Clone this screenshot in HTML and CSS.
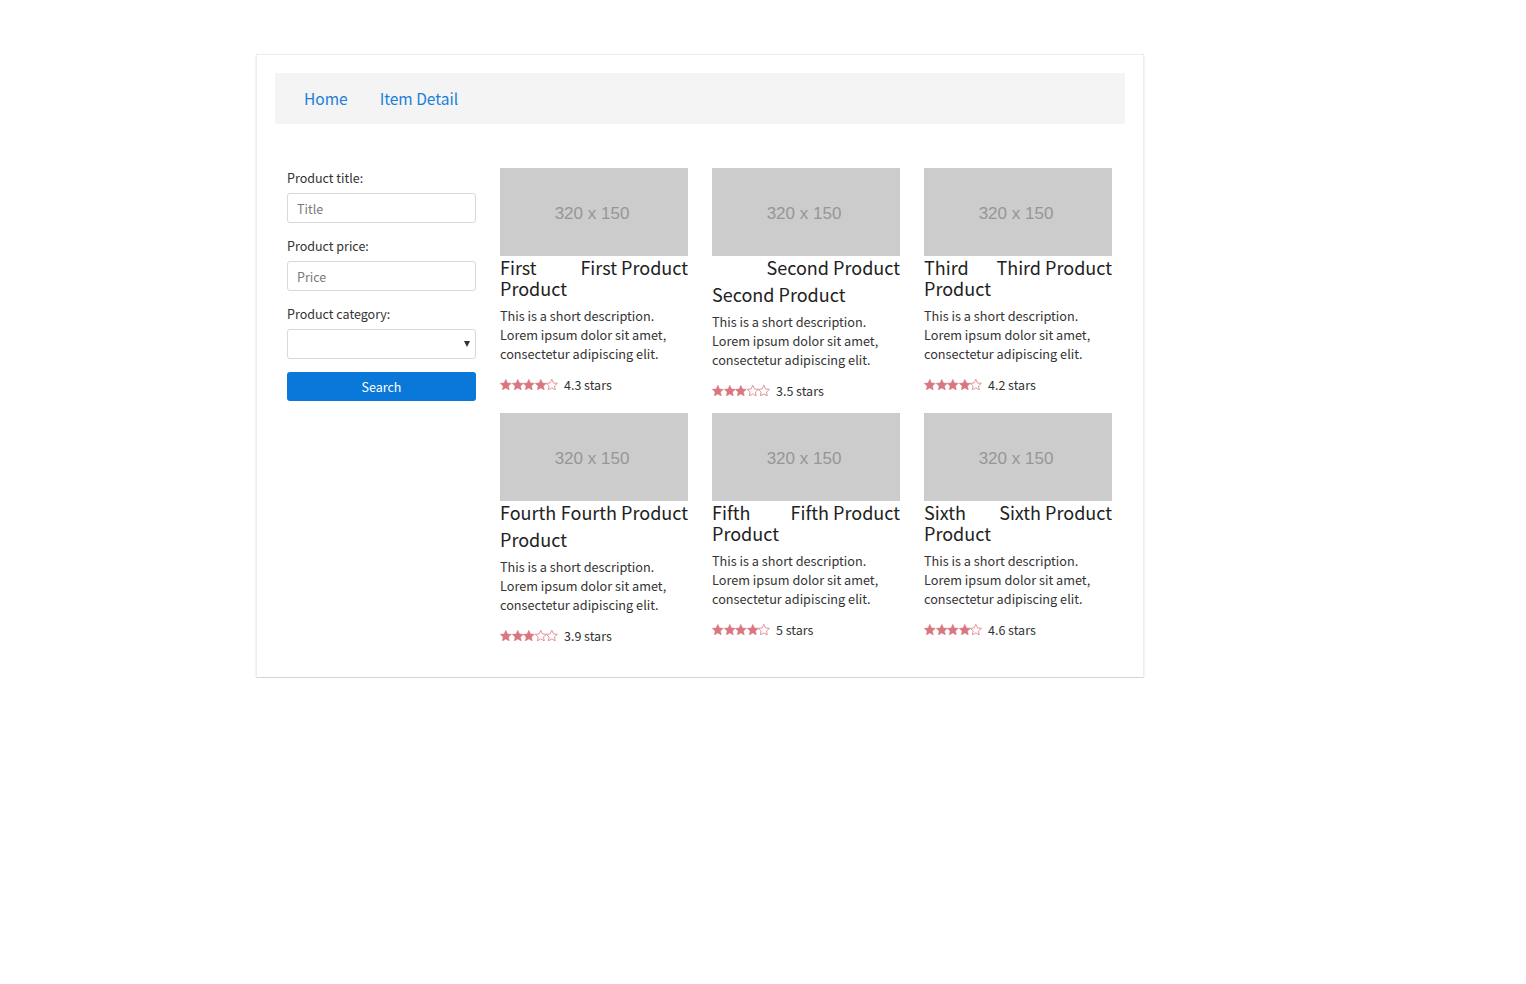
FILE: index.html
```html
<!DOCTYPE html>
<html lang="en">
<head>
<meta charset="utf-8">
<title>Products</title>
<link rel="stylesheet" href="styles.css">
</head>
<body>
<svg width="0" height="0" class="defs" aria-hidden="true">
  <defs>
    <polygon id="star" points="6,0.3 7.75,4.1 11.8,4.5 8.75,7.2 9.6,11.3 6,9.2 2.4,11.3 3.25,7.2 0.2,4.5 4.25,4.1"/>
  </defs>
</svg>
<div class="page">
  <nav class="nav">
    <a href="#" class="nav-link">Home</a>
    <a href="#" class="nav-link">Item Detail</a>
  </nav>
  <div class="content">
    <form class="filters">
      <label class="label">Product title:</label>
      <input class="field" type="text" placeholder="Title">
      <label class="label">Product price:</label>
      <input class="field" type="text" placeholder="Price">
      <label class="label">Product category:</label>
      <div class="select-wrap">
        <select class="field select"><option></option></select>
      </div>
      <button type="button" class="btn">Search</button>
    </form>
    <div class="grid">
      <div class="product">
        <div class="thumb">320 x 150</div>
        <div class="caption">
          <h4 class="price">First Product</h4>
          <h4 class="title">First Product</h4>
          <p class="desc">This is a short description. Lorem ipsum dolor sit amet, consectetur adipiscing elit.</p>
          <div class="rating">
            <span class="stars">
              <svg class="star" viewBox="0 0 12 12"><use href="#star"/></svg><svg class="star" viewBox="0 0 12 12"><use href="#star"/></svg><svg class="star" viewBox="0 0 12 12"><use href="#star"/></svg><svg class="star" viewBox="0 0 12 12"><use href="#star"/></svg><svg class="star empty" viewBox="0 0 12 12"><use href="#star"/></svg>
            </span>
            <span class="rating-text">4.3 stars</span>
          </div>
        </div>
      </div>
      <div class="product">
        <div class="thumb">320 x 150</div>
        <div class="caption">
          <h4 class="price">Second Product</h4>
          <h4 class="title">Second Product</h4>
          <p class="desc">This is a short description. Lorem ipsum dolor sit amet, consectetur adipiscing elit.</p>
          <div class="rating">
            <span class="stars">
              <svg class="star" viewBox="0 0 12 12"><use href="#star"/></svg><svg class="star" viewBox="0 0 12 12"><use href="#star"/></svg><svg class="star" viewBox="0 0 12 12"><use href="#star"/></svg><svg class="star empty" viewBox="0 0 12 12"><use href="#star"/></svg><svg class="star empty" viewBox="0 0 12 12"><use href="#star"/></svg>
            </span>
            <span class="rating-text">3.5 stars</span>
          </div>
        </div>
      </div>
      <div class="product">
        <div class="thumb">320 x 150</div>
        <div class="caption">
          <h4 class="price">Third Product</h4>
          <h4 class="title">Third Product</h4>
          <p class="desc">This is a short description. Lorem ipsum dolor sit amet, consectetur adipiscing elit.</p>
          <div class="rating">
            <span class="stars">
              <svg class="star" viewBox="0 0 12 12"><use href="#star"/></svg><svg class="star" viewBox="0 0 12 12"><use href="#star"/></svg><svg class="star" viewBox="0 0 12 12"><use href="#star"/></svg><svg class="star" viewBox="0 0 12 12"><use href="#star"/></svg><svg class="star empty" viewBox="0 0 12 12"><use href="#star"/></svg>
            </span>
            <span class="rating-text">4.2 stars</span>
          </div>
        </div>
      </div>
      <div class="product">
        <div class="thumb">320 x 150</div>
        <div class="caption">
          <h4 class="price">Fourth Product</h4>
          <h4 class="title">Fourth Product</h4>
          <p class="desc">This is a short description. Lorem ipsum dolor sit amet, consectetur adipiscing elit.</p>
          <div class="rating">
            <span class="stars">
              <svg class="star" viewBox="0 0 12 12"><use href="#star"/></svg><svg class="star" viewBox="0 0 12 12"><use href="#star"/></svg><svg class="star" viewBox="0 0 12 12"><use href="#star"/></svg><svg class="star empty" viewBox="0 0 12 12"><use href="#star"/></svg><svg class="star empty" viewBox="0 0 12 12"><use href="#star"/></svg>
            </span>
            <span class="rating-text">3.9 stars</span>
          </div>
        </div>
      </div>
      <div class="product">
        <div class="thumb">320 x 150</div>
        <div class="caption">
          <h4 class="price">Fifth Product</h4>
          <h4 class="title">Fifth Product</h4>
          <p class="desc">This is a short description. Lorem ipsum dolor sit amet, consectetur adipiscing elit.</p>
          <div class="rating">
            <span class="stars">
              <svg class="star" viewBox="0 0 12 12"><use href="#star"/></svg><svg class="star" viewBox="0 0 12 12"><use href="#star"/></svg><svg class="star" viewBox="0 0 12 12"><use href="#star"/></svg><svg class="star" viewBox="0 0 12 12"><use href="#star"/></svg><svg class="star empty" viewBox="0 0 12 12"><use href="#star"/></svg>
            </span>
            <span class="rating-text">5 stars</span>
          </div>
        </div>
      </div>
      <div class="product">
        <div class="thumb">320 x 150</div>
        <div class="caption">
          <h4 class="price">Sixth Product</h4>
          <h4 class="title">Sixth Product</h4>
          <p class="desc">This is a short description. Lorem ipsum dolor sit amet, consectetur adipiscing elit.</p>
          <div class="rating">
            <span class="stars">
              <svg class="star" viewBox="0 0 12 12"><use href="#star"/></svg><svg class="star" viewBox="0 0 12 12"><use href="#star"/></svg><svg class="star" viewBox="0 0 12 12"><use href="#star"/></svg><svg class="star" viewBox="0 0 12 12"><use href="#star"/></svg><svg class="star empty" viewBox="0 0 12 12"><use href="#star"/></svg>
            </span>
            <span class="rating-text">4.6 stars</span>
          </div>
        </div>
      </div>
    </div>
  </div>
</div>
</body>
</html>
```

FILE: styles.css
```css
* { box-sizing: border-box; }

html, body {
  margin: 0;
  padding: 0;
  background: #ffffff;
}

body {
  font-family: "Noto Sans CJK KR", "Noto Sans", sans-serif;
  font-weight: 400;
  color: #333333;
  font-size: 12.7px;
  line-height: 19px;
}

.defs {
  position: absolute;
  width: 0;
  height: 0;
  overflow: hidden;
}

.page {
  width: 888px;
  margin: 54px 0 0 256px;
  padding: 18px 18px 32px;
  background: #ffffff;
  border: 1px solid #ededed;
  border-bottom-color: #d4d4d4;
  box-shadow: 0 1px 2px rgba(0, 0, 0, 0.12);
}

.nav {
  display: flex;
  align-items: center;
  gap: 32px;
  height: 51px;
  padding-left: 29px;
  padding-bottom: 1px;
  background: #f4f4f4;
}

.nav-link {
  font-size: 15.5px;
  font-weight: 400;
  color: #1a7fd8;
  text-decoration: none;
  line-height: 22px;
}

.content {
  display: flex;
  gap: 24px;
  padding: 44px 12px 0 12px;
}

.filters {
  width: 189px;
  flex: none;
  display: flex;
  flex-direction: column;
  margin: 0;
}

.label {
  display: block;
  font-size: 12.5px;
  line-height: 19px;
  color: #333;
  margin-bottom: 6px;
}

.field {
  display: block;
  width: 100%;
  height: 30px;
  margin: 0 0 13px 0;
  padding: 0 9px;
  border: 1px solid #d9d9d9;
  border-radius: 3px;
  font-family: inherit;
  font-size: 12.5px;
  color: #333;
  background: #fff;
  outline: none;
}

.field::placeholder { color: #7a7a7a; }

.select-wrap {
  position: relative;
}

.select {
  -webkit-appearance: none;
  appearance: none;
}

.select-wrap::after {
  content: "";
  position: absolute;
  right: 6px;
  top: 12px;
  border-left: 3.5px solid transparent;
  border-right: 3.5px solid transparent;
  border-top: 6px solid #333;
  pointer-events: none;
}

.btn {
  display: block;
  width: 100%;
  height: 29px;
  border: none;
  border-radius: 3px;
  background: #0a78d9;
  color: #ffffff;
  font-family: inherit;
  font-size: 12.5px;
  cursor: pointer;
}

.grid {
  flex: 1;
  display: grid;
  grid-template-columns: repeat(3, 188px);
  column-gap: 24px;
  row-gap: 13px;
  align-content: start;
}

.thumb {
  height: 88px;
  background: #cccccc;
  color: #969696;
  font-family: "Liberation Sans", Arial, sans-serif;
  font-size: 17px;
  display: flex;
  align-items: center;
  justify-content: center;
  padding: 3px 4px 0 0;
}

.caption {
  padding-top: 1px;
}

.caption::after {
  content: "";
  display: block;
  clear: both;
}

.price,
.title {
  margin: 0;
  font-size: 18px;
  line-height: 21px;
  font-weight: 400;
  color: #222;
}

.price {
  float: right;
  margin: 0 0 6px 0;
}

.desc {
  margin: 7px 0 12px 0;
  font-size: 12.7px;
  line-height: 19px;
  color: #333;
}

.rating {
  display: flex;
  align-items: center;
  gap: 6px;
  line-height: 19px;
  font-size: 12.5px;
}

.stars {
  display: flex;
  gap: 0;
}

.star {
  width: 11.6px;
  height: 11.6px;
  display: block;
  fill: #d97780;
  stroke: #d97780;
  stroke-width: 0.5;
  stroke-linejoin: round;
}

.star.empty {
  fill: #ffffff;
  stroke-width: 0.8;
}
```
